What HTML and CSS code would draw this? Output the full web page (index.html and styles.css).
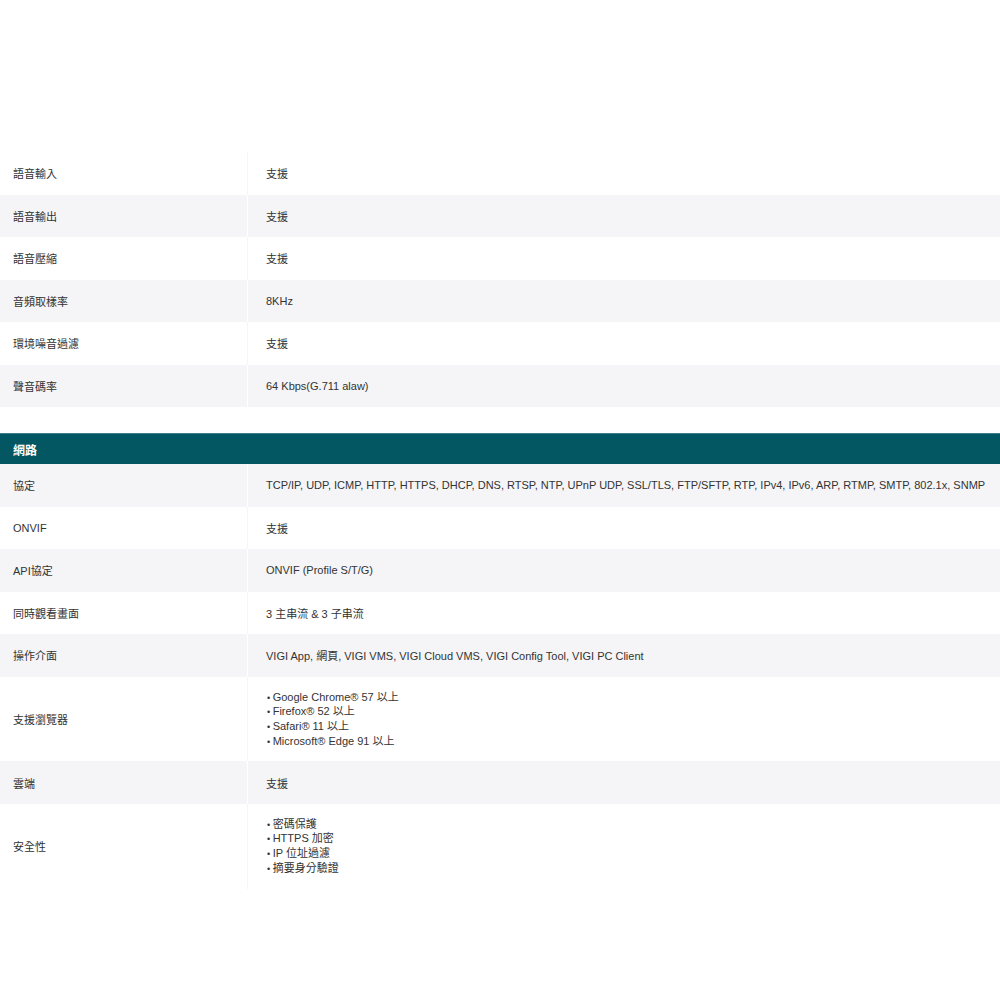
FILE: index.html
```html
<!DOCTYPE html>
<html lang="zh-Hant">
<head>
<meta charset="utf-8">
<link rel="stylesheet" href="styles.css">
</head>
<body>
<div class="page">
  <div class="spec">
    <div class="row"><div class="label">語音輸入</div><div class="value">支援</div></div>
    <div class="row alt"><div class="label">語音輸出</div><div class="value">支援</div></div>
    <div class="row"><div class="label">語音壓縮</div><div class="value">支援</div></div>
    <div class="row alt"><div class="label">音頻取樣率</div><div class="value">8KHz</div></div>
    <div class="row"><div class="label">環境噪音過濾</div><div class="value">支援</div></div>
    <div class="row alt"><div class="label">聲音碼率</div><div class="value">64 Kbps(G.711 alaw)</div></div>
  </div>

  <div class="section-head">網路</div>
  <div class="spec">
    <div class="row alt"><div class="label">協定</div><div class="value">TCP/IP, UDP, ICMP, HTTP, HTTPS, DHCP, DNS, RTSP, NTP, UPnP UDP, SSL/TLS, FTP/SFTP, RTP, IPv4, IPv6, ARP, RTMP, SMTP, 802.1x, SNMP</div></div>
    <div class="row"><div class="label">ONVIF</div><div class="value">支援</div></div>
    <div class="row alt"><div class="label">API協定</div><div class="value">ONVIF (Profile S/T/G)</div></div>
    <div class="row"><div class="label">同時觀看畫面</div><div class="value">3 主串流 &amp; 3 子串流</div></div>
    <div class="row alt"><div class="label">操作介面</div><div class="value">VIGI App, 網頁, VIGI VMS, VIGI Cloud VMS, VIGI Config Tool, VIGI PC Client</div></div>
    <div class="row tall"><div class="label">支援瀏覽器</div><div class="value">
      <ul class="list">
        <li>Google Chrome® 57 以上</li>
        <li>Firefox® 52 以上</li>
        <li>Safari® 11 以上</li>
        <li>Microsoft® Edge 91 以上</li>
      </ul>
    </div></div>
    <div class="row alt"><div class="label">雲端</div><div class="value">支援</div></div>
    <div class="row tall"><div class="label">安全性</div><div class="value">
      <ul class="list">
        <li>密碼保護</li>
        <li>HTTPS 加密</li>
        <li>IP 位址過濾</li>
        <li>摘要身分驗證</li>
      </ul>
    </div></div>
  </div>
</div>
</body>
</html>
```

FILE: styles.css
```css
html, body {
  margin: 0;
  padding: 0;
  background: #fff;
}
body {
  font-family: "Liberation Sans", Arial, "Noto Sans CJK TC", sans-serif;
  font-size: 11px;
  color: #333;
}
.page {
  padding-top: 152px;
}
.spec {
  display: flex;
  flex-direction: column;
}
.row {
  display: grid;
  grid-template-columns: 248px 1fr;
  min-height: 42.5px;
  background: #fff;
}
.row.alt {
  background: #f5f5f7;
}
.label {
  display: flex;
  align-items: center;
  padding-left: 13px;
  border-right: 1px solid #f5f5f7;
}
.row.alt .label {
  border-right-color: #fff;
}
.value {
  display: flex;
  align-items: center;
  padding-left: 18px;
}
.row.tall .value {
  padding-top: 13px;
  padding-bottom: 13px;
}
.list {
  list-style: none;
  margin: 0;
  padding: 0;
}
.list li {
  height: 14.7px;
  line-height: 14.7px;
  padding-left: 1px;
}
.list li::before {
  content: "• ";
  font-size: 9px;
}
.section-head {
  margin-top: 26px;
  height: 31px;
  border-top: 1px solid #3c7f88;
  box-sizing: border-box;
  color: #fff;
  font-weight: bold;
  font-size: 12px;
  display: flex;
  align-items: center;
  padding-left: 13px;
  background-color: #035763;
}
```
